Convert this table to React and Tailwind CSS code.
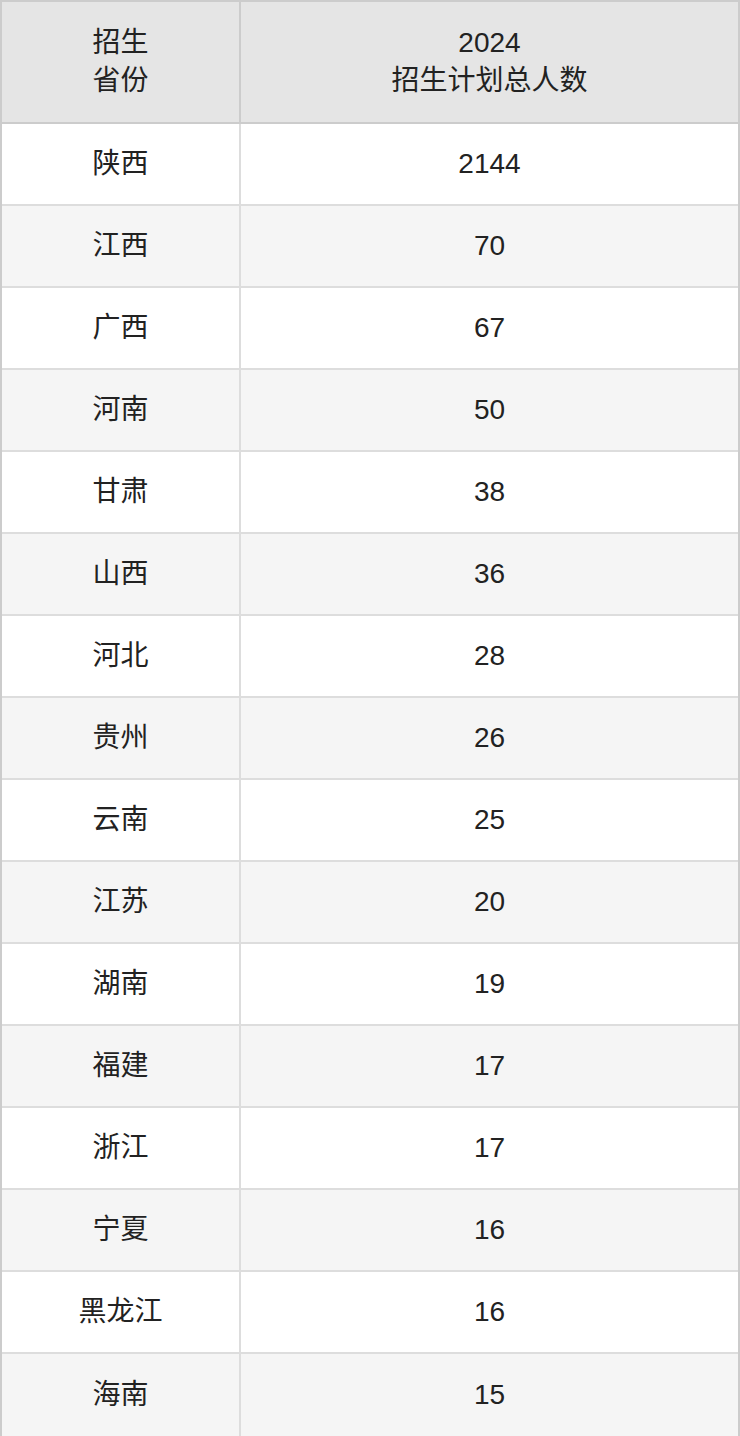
import React from 'react'

const rows = [
  ['陕西', '2144'],
  ['江西', '70'],
  ['广西', '67'],
  ['河南', '50'],
  ['甘肃', '38'],
  ['山西', '36'],
  ['河北', '28'],
  ['贵州', '26'],
  ['云南', '25'],
  ['江苏', '20'],
  ['湖南', '19'],
  ['福建', '17'],
  ['浙江', '17'],
  ['宁夏', '16'],
  ['黑龙江', '16'],
  ['海南', '15'],
]

const font = { fontFamily: '"Liberation Sans", "Noto Sans CJK SC", sans-serif' }

export default function App() {
  return (
    <div className="w-[740px] bg-white text-[#222] text-[28px]" style={font}>
      <div className="border-2 border-[#cccccc]">
        {/* header */}
        <div className="flex bg-[#e5e5e5] border-b-2 border-[#cccccc] h-[122px]">
          <div className="w-[239px] flex items-center justify-center text-center leading-[38px] border-r-2 border-[#cccccc]">
            <div>招生<br />省份</div>
          </div>
          <div className="flex-1 flex items-center justify-center text-center leading-[38px]">
            <div>2024<br />招生计划总人数</div>
          </div>
        </div>

        {rows.map(([prov, n], i) => (
          <div
            key={i}
            className={`flex h-[82px] ${i < rows.length - 1 ? 'border-b-2 border-[#dddddd]' : 'h-[80px]'} ${i % 2 === 1 ? 'bg-[#f5f5f5]' : 'bg-white'}`}
          >
            <div className="w-[239px] flex items-center justify-center border-r-2 border-[#dddddd]">{prov}</div>
            <div className="flex-1 flex items-center justify-center">{n}</div>
          </div>
        ))}
      </div>
    </div>
  )
}
